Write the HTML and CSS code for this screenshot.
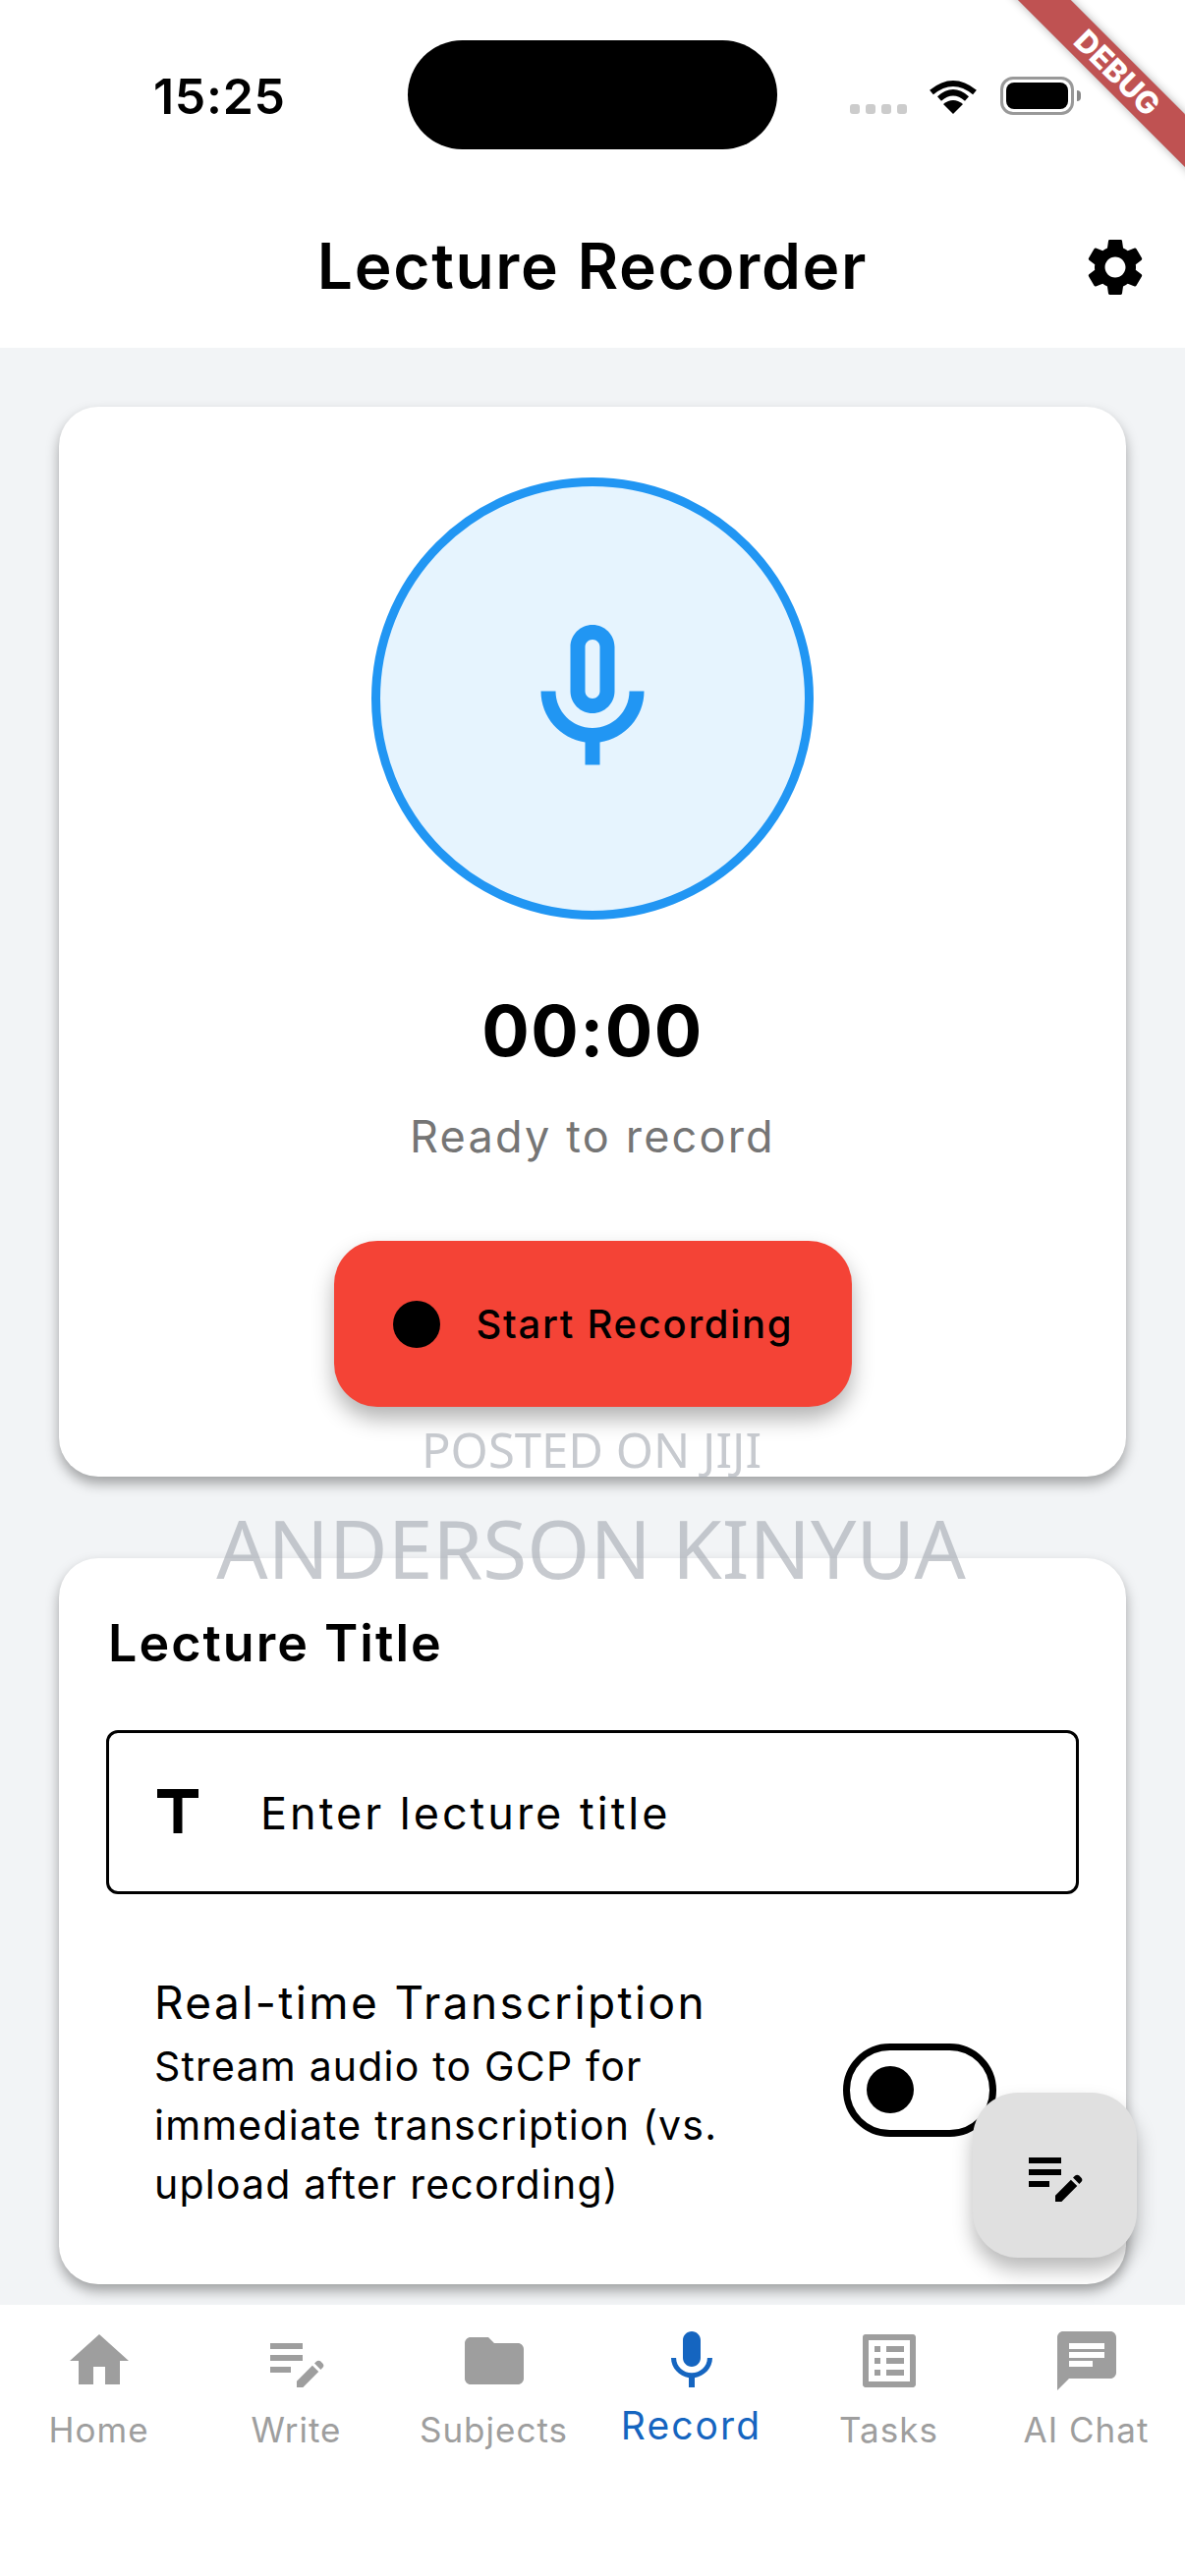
FILE: index.html
```html
<!DOCTYPE html>
<html lang="en">
<head>
    <meta charset="UTF-8">
    <meta name="viewport" content="width=device-width, initial-scale=1.0">
    <title>Lecture Recorder</title>
    <link rel="stylesheet" href="styles.css">
</head>
<body>
    <div class="phone">
        <div class="status">
            <span class="time">15:25</span>
            <div class="island"></div>
            <div class="status-icons">
                <div class="dots"><i></i><i></i><i></i><i></i></div>
                <svg class="wifi" viewBox="0 0 50 37">
                    <path d="M3 15Q25 -3 47 15" fill="none" stroke="#000" stroke-width="6"/>
                    <path d="M11 21.500Q25 9 39 21.500" fill="none" stroke="#000" stroke-width="6"/>
                    <path d="M25 37L15 27Q25 19 35 27Z" fill="#000"/>
                </svg>
                <div class="battery"><div class="battery-fill"></div></div>
                <div class="battery-nub"></div>
            </div>
        </div>

        <header class="appbar">
            <span></span>
            <h1>Lecture Recorder</h1>
            <svg class="gear" viewBox="0 0 24 24"><path d="M19.140 12.940c.04-.3.06-.61.06-.94 0-.32-.02-.64-.07-.94l2.030-1.580c.18-.14.23-.41.12-.61l-1.920-3.320c-.12-.22-.37-.29-.59-.22l-2.390.96c-.5-.38-1.030-.7-1.620-.94l-.36-2.540c-.04-.24-.24-.41-.48-.41h-3.840c-.24 0-.43.17-.47.41l-.36 2.540c-.59.24-1.130.57-1.620.94l-2.390-.96c-.22-.08-.47 0-.59.22L2.740 8.870c-.12.21-.08.47.12.61l2.030 1.580c-.05.3-.09.63-.09.94s.02.64.07.94l-2.030 1.580c-.18.14-.23.41-.12.61l1.920 3.320c.12.22.37.29.59.22l2.390-.96c.5.38 1.030.7 1.620.94l.36 2.540c.05.24.24.41.48.41h3.840c.24 0 .44-.17.47-.41l.36-2.540c.59-.24 1.130-.56 1.620-.94l2.390.96c.22.08.47 0 .59-.22l1.920-3.320c.12-.22.07-.47-.12-.61l-2.010-1.580zM12 15.600c-1.980 0-3.600-1.620-3.600-3.600s1.620-3.600 3.600-3.600 3.600 1.620 3.600 3.600-1.620 3.600-3.600 3.600z"/></svg>
        </header>

        <main class="content">
            <section class="card recorder">
                <div class="mic-circle">
                    <svg class="mic-large" viewBox="0 0 24 24"><path d="M12 14c1.660 0 3-1.340 3-3V5c0-1.660-1.340-3-3-3S9 3.340 9 5v6c0 1.660 1.340 3 3 3zm-1-9c0-.55.45-1 1-1s1 .45 1 1v6c0 .55-.45 1-1 1s-1-.45-1-1V5zm6 6c0 2.760-2.240 5-5 5s-5-2.240-5-5H5c0 3.530 2.610 6.430 6 6.920V21h2v-3.080c3.390-.49 6-3.390 6-6.920h-2z"/></svg>
                </div>
                <div class="timer">00:00</div>
                <div class="state">Ready to record</div>
                <button class="record-btn"><span class="record-dot"></span>Start Recording</button>
            </section>

            <section class="card details">
                <h2>Lecture Title</h2>
                <div class="field">
                    <svg class="field-icon" viewBox="0 0 24 24"><path d="M5 4v3h5.500v12h3V7H19V4z"/></svg>
                    <input type="text" placeholder="Enter lecture title">
                </div>
                <div class="option">
                    <div class="option-text">
                        <div class="option-title">Real-time Transcription</div>
                        <div class="option-desc">Stream audio to GCP for<br>immediate transcription (vs.<br>upload after recording)</div>
                    </div>
                    <div class="switch"><span class="knob"></span></div>
                </div>
            </section>
        </main>

        <nav class="tabs">
            <div class="tab">
                <svg viewBox="0 0 24 24"><path d="M10 20v-6h4v6h5v-8h3L12 3 2 12h3v8z"/></svg>
                <span>Home</span>
            </div>
            <div class="tab">
                <svg viewBox="0 0 24 24"><path d="M3 10h11v2H3v-2zm0-2h11V6H3v2zm0 8h7v-2H3v2zm15.010-3.130l.7-.7c.39-.39 1.020-.39 1.410 0l.71.71c.39.39.39 1.020 0 1.410l-.7.7-2.120-2.120zm-.71.71l-5.300 5.300V21h2.120l5.300-5.300-2.120-2.120z"/></svg>
                <span>Write</span>
            </div>
            <div class="tab">
                <svg viewBox="0 0 24 24"><path d="M10 4H4c-1.100 0-1.990.9-1.990 2L2 18c0 1.100.9 2 2 2h16c1.100 0 2-.9 2-2V8c0-1.100-.9-2-2-2h-8l-2-2z"/></svg>
                <span>Subjects</span>
            </div>
            <div class="tab active">
                <svg viewBox="0 0 24 24"><path d="M12 14c1.660 0 3-1.340 3-3V5c0-1.660-1.340-3-3-3S9 3.340 9 5v6c0 1.660 1.340 3 3 3zm5.300-3c0 3-2.540 5.100-5.300 5.100S6.700 14 6.700 11H5c0 3.410 2.720 6.230 6 6.720V21h2v-3.280c3.280-.48 6-3.300 6-6.720h-1.700z"/></svg>
                <span>Record</span>
            </div>
            <div class="tab">
                <svg viewBox="0 0 24 24"><path d="M19 5v14H5V5h14m1.100-2H3.900c-.5 0-.9.4-.9.9v16.200c0 .4.4.9.9.9h16.200c.4 0 .9-.5.9-.9V3.900c0-.5-.5-.9-.9-.9zM11 7h6v2h-6V7zm0 4h6v2h-6v-2zm0 4h6v2h-6zM7 7h2v2H7zm0 4h2v2H7zm0 4h2v2H7z"/></svg>
                <span>Tasks</span>
            </div>
            <div class="tab">
                <svg viewBox="0 0 24 24"><path d="M20 2H4c-1.100 0-1.990.9-1.990 2L2 22l4-4h14c1.100 0 2-.9 2-2V4c0-1.100-.9-2-2-2zM6 9h12v2H6V9zm8 5H6v-2h8v2zm4-6H6V6h12v2z"/></svg>
                <span>AI Chat</span>
            </div>
        </nav>

        <!-- things that float over the page -->
        <div class="watermark">
            <div class="wm-small">POSTED ON JIJI</div>
            <div class="wm-large">ANDERSON KINYUA</div>
        </div>
        <button class="fab">
            <svg viewBox="0 0 24 24"><path d="M3 10h11v2H3v-2zm0-2h11V6H3v2zm0 8h7v-2H3v2zm15.010-3.130l.7-.7c.39-.39 1.020-.39 1.410 0l.71.71c.39.39.39 1.020 0 1.410l-.7.7-2.120-2.120zm-.71.71l-5.300 5.300V21h2.120l5.300-5.300-2.120-2.120z"/></svg>
        </button>
        <div class="debug"><span>DEBUG</span></div>
    </div>
</body>
</html>
```

FILE: styles.css
```css
* {
    box-sizing: border-box;
}
html, body {
    margin: 0;
    padding: 0;
}
body {
    font-family: Inter, "Noto Sans", sans-serif;
    color: #000;
    background-color: #fff;
}
.phone {
    position: relative;
    width: 1206px;
    height: 2622px;
    overflow: hidden;
    display: flex;
    flex-direction: column;
}

/* status bar */
.status {
    height: 190px;
    padding: 41px 0 0 156px;
    display: flex;
    align-items: flex-start;
}
.time {
    width: 259px;
    margin-top: 28px;
    font-size: 50px;
    font-weight: 600;
    line-height: 58px;
    letter-spacing: 0.7px;
}
.island {
    width: 376px;
    height: 111px;
    border-radius: 56px;
    background-color: #000;
}
.status-icons {
    margin: 37px 0 0 74px;
    display: flex;
    align-items: flex-start;
}
.dots {
    margin-top: 28px;
    display: flex;
    gap: 6px;
}
.dots i {
    width: 10px;
    height: 10px;
    border-radius: 3px;
    background-color: #ccc;
}
.wifi {
    width: 50px;
    height: 37px;
    margin: 1px 0 0 22px;
}
.battery {
    width: 75px;
    height: 39px;
    margin-left: 23px;
    padding: 3px;
    border: 3px solid #999;
    border-radius: 13px;
}
.battery-fill {
    width: 100%;
    height: 100%;
    border-radius: 8px;
    background-color: #000;
}
.battery-nub {
    width: 4px;
    height: 11px;
    margin: 14px 0 0 3px;
    border-radius: 0 4px 4px 0;
    background-color: #888;
}

/* app bar */
.appbar {
    height: 164px;
    padding: 0 36px;
    display: grid;
    grid-template-columns: 1fr auto 1fr;
    align-items: center;
}
.appbar h1 {
    margin: 0 0 2px;
    font-size: 64px;
    font-weight: 600;
    line-height: 76px;
    letter-spacing: 1.7px;
}
.gear {
    width: 70px;
    height: 70px;
    justify-self: end;
}

/* cards */
.content {
    flex: 1;
    padding: 60px 60px 0;
    background-color: #f2f4f6;
}
.card {
    border-radius: 40px;
    background-color: #fff;
    box-shadow: 0 7px 13px rgba(0, 0, 0, 0.34);
}
.recorder {
    height: 1089px;
    padding-top: 72px;
    display: flex;
    flex-direction: column;
    align-items: center;
}
.mic-circle {
    width: 450px;
    height: 450px;
    border: 9px solid #2196f3;
    border-radius: 50%;
    background-color: #e6f4fe;
    display: flex;
    align-items: center;
    justify-content: center;
}
.mic-large {
    width: 180px;
    height: 180px;
    fill: #2196f3;
}
.timer {
    margin-top: 69px;
    font-size: 72px;
    font-weight: 700;
    line-height: 88px;
    letter-spacing: 1.5px;
}
.state {
    margin-top: 36px;
    font-size: 45px;
    line-height: 56px;
    letter-spacing: 2.2px;
    color: #757575;
}
.record-btn {
    width: 527px;
    height: 169px;
    margin-top: 78px;
    padding: 0 0 0 60px;
    border: none;
    border-radius: 44px;
    background-color: #f44336;
    box-shadow: 0 12px 22px rgba(0, 0, 0, 0.3);
    display: flex;
    align-items: center;
    font-family: inherit;
    font-size: 40px;
    font-weight: 500;
    letter-spacing: 1.7px;
    color: #000;
}
.record-dot {
    width: 48px;
    height: 48px;
    margin-right: 37px;
    border-radius: 50%;
    background-color: #000;
}
.details {
    height: 739px;
    margin-top: 83px;
    padding: 57px 48px 0;
}
.details h2 {
    margin: 0 0 0 2px;
    font-size: 52px;
    font-weight: 600;
    line-height: 60px;
    letter-spacing: 2px;
}
.field {
    height: 167px;
    margin-top: 58px;
    padding: 2px 0 0 34px;
    border: 3px solid #000;
    border-radius: 12px;
    display: flex;
    align-items: center;
}
.field-icon {
    width: 72px;
    height: 72px;
    margin-top: -2px;
    flex-shrink: 0;
}
.field input {
    flex: 1;
    margin-left: 48px;
    padding: 0;
    border: none;
    outline: none;
    background: none;
    font-family: inherit;
    font-size: 45px;
    letter-spacing: 3px;
    color: #000;
}
.field input::placeholder {
    color: #000;
    opacity: 1;
}
.option {
    margin-top: 80px;
    padding: 0 84px 0 49px;
    display: flex;
    align-items: center;
    justify-content: space-between;
}
.option-title {
    font-size: 46px;
    line-height: 60px;
    letter-spacing: 2.4px;
}
.option-desc {
    margin-top: 5px;
    font-size: 41px;
    line-height: 60px;
    letter-spacing: 1.2px;
}
.switch {
    width: 156px;
    height: 95px;
    margin-bottom: 7px;
    padding-left: 17px;
    border: 7px solid #000;
    border-radius: 48px;
    display: flex;
    align-items: center;
}
.knob {
    width: 48px;
    height: 48px;
    border-radius: 50%;
    background-color: #000;
}

/* bottom tabs */
.tabs {
    height: 276px;
    padding-top: 21px;
    background-color: #fff;
    display: grid;
    grid-template-columns: repeat(6, 201px);
}
.tab {
    display: flex;
    flex-direction: column;
    align-items: center;
    color: #9e9e9e;
}
.tab svg {
    width: 72px;
    height: 72px;
    fill: #9e9e9e;
}
.tab span {
    margin-top: 14px;
    font-size: 35px;
    line-height: 40px;
    letter-spacing: 1px;
}
.tab.active {
    color: #1565c0;
}
.tab.active svg {
    fill: #1565c0;
}
.tab.active span {
    margin-top: 10px;
    font-size: 39px;
    letter-spacing: 2.1px;
}

/* overlays */
.watermark {
    position: absolute;
    left: 0;
    right: 0;
    top: 1443px;
    text-align: center;
    font-family: "Noto Sans", sans-serif;
    color: rgba(165, 170, 178, 0.62);
    pointer-events: none;
}
.wm-small {
    margin-right: 2px;
    font-size: 49px;
    line-height: 64px;
}
.wm-large {
    margin: 12px 3px 0 0;
    font-size: 82px;
    line-height: 112px;
}
.fab {
    position: absolute;
    left: 990px;
    top: 2130px;
    width: 167px;
    height: 168px;
    padding: 0;
    border: none;
    border-radius: 46px;
    background-color: #e0e0e0;
    box-shadow: 0 12px 20px rgba(0, 0, 0, 0.28);
    display: flex;
    align-items: center;
    justify-content: center;
}
.fab svg {
    width: 72px;
    height: 72px;
}
.debug {
    position: absolute;
    left: 1000px;
    top: 58px;
    width: 280px;
    height: 37.500px;
    padding-right: 8px;
    background-color: rgba(160, 0, 0, 0.68);
    box-shadow: 0 0 10px rgba(0, 0, 0, 0.3);
    transform: rotate(45deg);
    display: flex;
    align-items: center;
    justify-content: center;
    font-size: 31px;
    font-weight: 800;
    color: #fff;
}
```
